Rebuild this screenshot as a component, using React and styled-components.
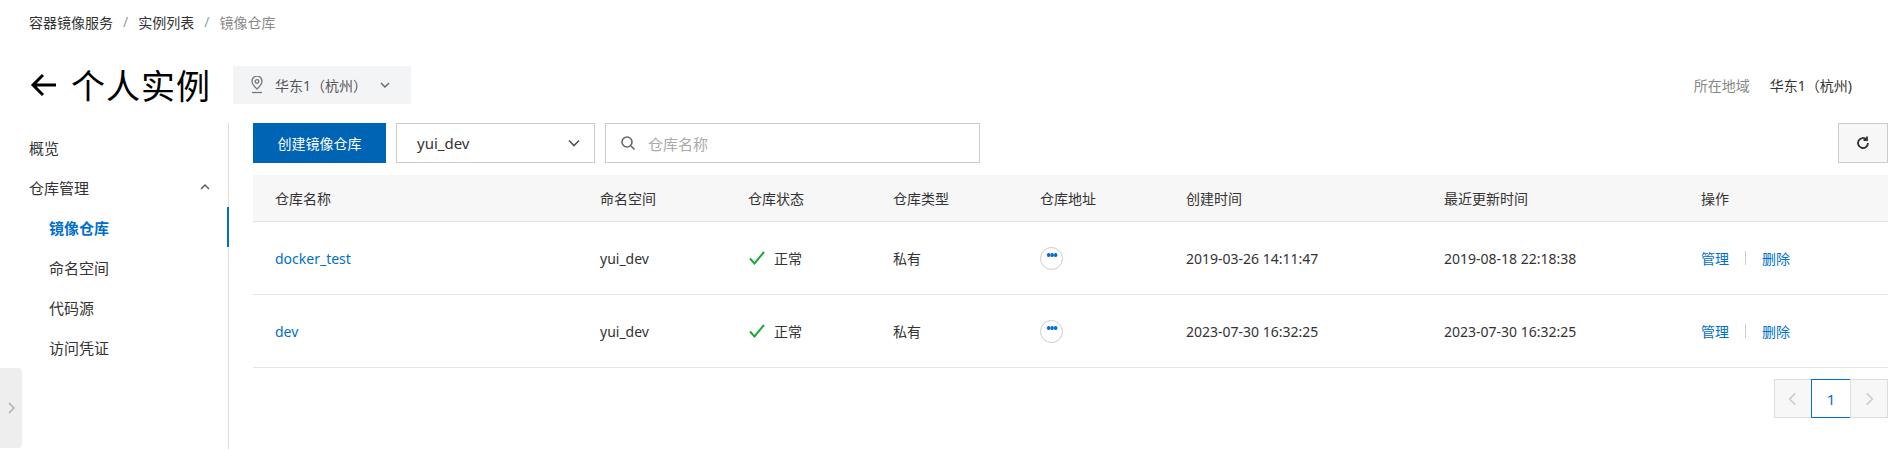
import React from 'react';
import styled, { createGlobalStyle } from 'styled-components';

const Global = createGlobalStyle`
  body { margin: 0; background: #fff; font-family: "Noto Sans", "Noto Sans CJK SC", sans-serif; color: #333; }
  * { box-sizing: border-box; }
`;
const BLUE = '#0070cc';

const Page = styled.div`width: 1892px; height: 449px; overflow: hidden; position: relative;`;
const Crumbs = styled.div`height: 46px; padding: 12px 0 0 29px; font-size: 14px; color: #333; display: flex; gap: 10px;`;
const Sep = styled.span`color: #999;`;
const Cur = styled.span`color: #888;`;
const TitleRow = styled.div`height: 77px; display: flex; align-items: center; padding: 0 40px 0 29px;`;
const Title = styled.h1`margin: 0 22px 0 12px; font-size: 34px; font-weight: 400; color: #000; letter-spacing: 1px;`;
const Region = styled.div`width: 178px; height: 38px; background: #f3f4f5; display: flex; align-items: center; padding: 0 16px; gap: 10px; font-size: 14px; color: #555;`;
const RightInfo = styled.div`margin-left: auto; font-size: 14px; display: flex; gap: 20px;`;
const Muted = styled.span`color: #888;`;
const Body = styled.div`display: flex;`;
const Side = styled.div`width: 229px; height: 326px; border-right: 1px solid #ddd; padding-top: 4px;`;
const NavItem = styled.div`
  height: 40px; display: flex; align-items: center; font-size: 15px;
  padding-left: ${p => p.sub ? 49 : 29}px; padding-right: 14px; justify-content: space-between;
  color: ${p => p.active ? BLUE : '#333'};
  font-weight: ${p => p.active ? 600 : 400};
  margin-right: -1px; border-right: 2px solid ${p => p.active ? BLUE : 'transparent'};
`;
const Handle = styled.div`position: absolute; left: 0; top: 368px; width: 22px; height: 80px; background: #eee; border-radius: 0 4px 4px 0; display: flex; align-items: center; justify-content: center; color: #aaa;`;
const Main = styled.div`flex: 1; padding: 0 4px 0 24px;`;
const Toolbar = styled.div`display: flex; gap: 10px; height: 40px; margin-bottom: 12px;`;
const Primary = styled.button`width: 133px; background: #0064b4; color: #fff; border: 0; font-size: 14px; font-family: inherit;`;
const Select = styled.div`width: 199px; border: 1px solid #ccc; display: flex; align-items: center; justify-content: space-between; padding: 0 10px 0 20px; font-size: 15px;`;
const Search = styled.div`width: 375px; border: 1px solid #ccc; display: flex; align-items: center; gap: 12px; padding-left: 14px; font-size: 15px; color: #aaa;`;
const Refresh = styled.div`margin-left: auto; width: 50px; border: 1px solid #ccc; background: #f7f7f7; display: flex; align-items: center; justify-content: center;`;
const Grid = styled.div`display: grid; grid-template-columns: 325px 148px 145px 147px 146px 258px 257px 1fr; height: ${p => p.h}px; border-bottom: 1px solid #e5e5e5; background: ${p => p.head ? '#f7f7f7' : '#fff'}; font-size: 14px;`;
const Cell = styled.div`display: flex; align-items: center; padding-left: 22px; gap: 8px; color: ${p => p.link ? BLUE : '#333'};`;
const Link = styled.span`color: ${BLUE};`;
const Bar = styled.span`width: 1px; height: 14px; background: #ccc; margin: 0 8px;`;
const Dots = styled.span`width: 23px; height: 23px; border-radius: 50%; border: 1px solid #ccc; display: inline-flex; align-items: center; justify-content: center; color: ${BLUE}; font-size: 12px; font-weight: 700; letter-spacing: -1px; padding-bottom: 5px;`;
const Pager = styled.div`display: flex; justify-content: flex-end; margin-top: 11px;`;
const PBtn = styled.div`width: ${p => p.active ? 40 : 38}px; height: 39px; display: flex; align-items: center; justify-content: center; font-size: 15px; border: 1px solid ${p => p.active ? BLUE : '#ddd'}; background: ${p => p.active ? '#fff' : '#f7f7f7'}; color: ${p => p.active ? BLUE : '#ccc'}; margin-left: -1px;`;

const rows = [
  ['docker_test', '2019-03-26 14:11:47', '2019-08-18 22:18:38'],
  ['dev', '2023-07-30 16:32:25', '2023-07-30 16:32:25'],
];

const Chev = ({ d = 'M4 6l4 4 4-4', c = '#666', s = 16 }) => (
  <svg width={s} height={s} viewBox="0 0 16 16" fill="none" stroke={c} strokeWidth="1.4"><path d={d} /></svg>
);

export default function App() {
  return (
    <Page>
      <Global />
      <Crumbs><span>容器镜像服务</span><Sep>/</Sep><span>实例列表</span><Sep>/</Sep><Cur>镜像仓库</Cur></Crumbs>
      <TitleRow>
        <svg width="30" height="30" viewBox="0 0 30 30" fill="none" stroke="#000" strokeWidth="3"><path d="M27 15H4M14 5L4 15l10 10" /></svg>
        <Title>个人实例</Title>
        <Region>
          <svg width="16" height="18" viewBox="0 0 16 18" fill="none" stroke="#777" strokeWidth="1.3"><path d="M8 13s-5-4.5-5-8a5 5 0 0110 0c0 3.5-5 8-5 8z" /><circle cx="8" cy="5.5" r="1.8" /><path d="M3 16.5h10" /></svg>
          <span>华东1（杭州）</span>
          <Chev />
        </Region>
        <RightInfo><Muted>所在地域</Muted><span>华东1（杭州)</span></RightInfo>
      </TitleRow>
      <Body>
        <Side>
          <NavItem>概览</NavItem>
          <NavItem>仓库管理<Chev d="M4 10l4-4 4 4" c="#555" /></NavItem>
          <NavItem sub active>镜像仓库</NavItem>
          <NavItem sub>命名空间</NavItem>
          <NavItem sub>代码源</NavItem>
          <NavItem sub>访问凭证</NavItem>
        </Side>
        <Main>
          <Toolbar>
            <Primary>创建镜像仓库</Primary>
            <Select><span>yui_dev</span><Chev s={20} c="#555" /></Select>
            <Search>
              <svg width="16" height="16" viewBox="0 0 16 16" fill="none" stroke="#666" strokeWidth="1.6"><circle cx="7" cy="7" r="5" /><path d="M11 11l3.5 3.5" /></svg>
              <span>仓库名称</span>
            </Search>
            <Refresh>
              <svg width="16" height="16" viewBox="0 0 16 16" fill="none" stroke="#333" strokeWidth="1.8"><path d="M13 8a5 5 0 11-1.5-3.6" /><path d="M12 1.5v3.5H8.5" /></svg>
            </Refresh>
          </Toolbar>
          <Grid head h={47}>
            {['仓库名称','命名空间','仓库状态','仓库类型','仓库地址','创建时间','最近更新时间','操作'].map(t => <Cell key={t}>{t}</Cell>)}
          </Grid>
          {rows.map(r => (
            <Grid h={73} key={r[0]}>
              <Cell link>{r[0]}</Cell>
              <Cell>yui_dev</Cell>
              <Cell><svg width="18" height="18" viewBox="0 0 18 18" fill="none" stroke="#1fa83a" strokeWidth="2"><path d="M2 9.5l4.5 5L16 3" /></svg>正常</Cell>
              <Cell>私有</Cell>
              <Cell><Dots>•••</Dots></Cell>
              <Cell>{r[1]}</Cell>
              <Cell>{r[2]}</Cell>
              <Cell><Link>管理</Link><Bar /><Link>删除</Link></Cell>
            </Grid>
          ))}
          <Pager>
            <PBtn><Chev d="M10 3L5 8l5 5" c="#ccc" s={18} /></PBtn>
            <PBtn active>1</PBtn>
            <PBtn><Chev d="M6 3l5 5-5 5" c="#ccc" s={18} /></PBtn>
          </Pager>
        </Main>
      </Body>
      <Handle><Chev d="M6 3l5 5-5 5" c="#aaa" /></Handle>
    </Page>
  );
}
